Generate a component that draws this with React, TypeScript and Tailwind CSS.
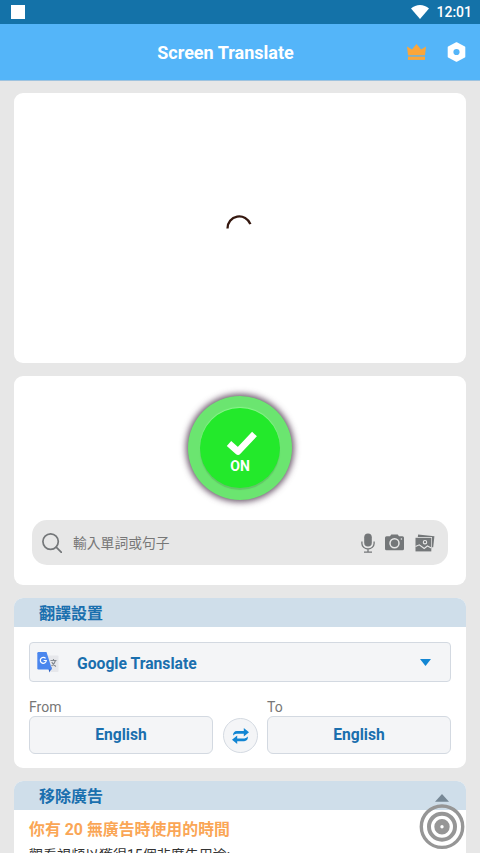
import React from 'react';

interface SectionProps {
  title: string;
  className?: string;
  children: React.ReactNode;
}

function Section({ title, className = '', children }: SectionProps) {
  return (
    <section className={`shrink-0 overflow-hidden rounded-[9px] bg-white ${className}`}>
      <h2 className="flex h-[29px] items-center bg-[#cfdeea] pt-[2px] pl-[25px] text-[16px] leading-none font-bold text-[#1a6fae]">
        {title}
      </h2>
      {children}
    </section>
  );
}

function StatusBar() {
  return (
    <div className="flex h-6 shrink-0 items-center bg-[#1472a8] pr-[8px] pl-[11px]">
      <div className="h-[14px] w-[14px] bg-white" />
      <svg className="ml-auto h-[14px] w-[18px]" viewBox="0 0 18 14">
        <path d="M0 3.6C5-1.2 13-1.2 18 3.6L9 14Z" fill="#fff" />
      </svg>
      <span className="ml-[7px] text-[14px] leading-none font-medium text-white">12:01</span>
    </div>
  );
}

function Header() {
  return (
    <header className="grid h-[57px] shrink-0 grid-cols-[1fr_auto_1fr] items-center border-b border-[#9fc3df] bg-[#54b5f9] pr-[14px]">
      <h1 className="col-start-2 mt-[2px] ml-[-15px] text-[18px] leading-none font-bold text-white">
        Screen Translate
      </h1>
      <div className="flex items-center justify-end gap-[21px]">
        <svg className="h-[16px] w-[19px]" viewBox="0 0 19 16" fill="#fba63a">
          <path d="M0 2.6 4.9 5.6 9.5 0 14.1 5.6 19 2.6 18 11.3H1Z" />
          <path d="M1 12.6H18V15.9H1Z" />
        </svg>
        <svg className="h-[20px] w-[19px]" viewBox="0 0 19 20">
          <path
            d="M9.5 1 17.5 5.3V14.7L9.5 19 1.5 14.7V5.3Z"
            fill="#fff"
            stroke="#fff"
            strokeWidth="1.6"
            strokeLinejoin="round"
          />
          <circle cx="9.5" cy="10" r="3.1" fill="#54b5f9" />
        </svg>
      </div>
    </header>
  );
}

function PowerButton() {
  return (
    <button className="mx-auto mt-[20px] flex h-[104px] w-[104px] items-center justify-center rounded-full bg-[#6be570] shadow-[0_0_6px_2px_rgba(70,45,70,0.8)]">
      <span className="flex h-[80px] w-[80px] flex-col items-center rounded-full bg-[#23e92b] pt-[22px] shadow-[0_2px_1px_#63c567,0_-1px_1px_#8df58f]">
        <svg className="ml-[3px] h-[26px] w-[32px]" viewBox="0 0 32 26">
          <path d="M3 13.5 12 21.5 28.5 4" fill="none" stroke="#fff" strokeWidth="6.6" strokeLinejoin="round" />
        </svg>
        <span className="mt-[3px] font-[Roboto] text-[14px] leading-none font-bold text-white">ON</span>
      </span>
    </button>
  );
}

function SearchBar() {
  return (
    <div className="mx-[18px] mt-[20px] flex h-[45px] items-center rounded-[15px] bg-[#e7e7e7] pr-[13px] pl-[10px] text-[#747779]">
      <svg className="h-[20px] w-[20px]" viewBox="0 0 20 20" fill="none" stroke="currentColor" strokeWidth="1.7">
        <circle cx="8.6" cy="8.6" r="7.7" />
        <path d="m14.2 14.2 5.2 5.2" strokeLinecap="round" />
      </svg>
      <span className="ml-[11px] pt-[2px] text-[13.8px] leading-none text-[#777]">輸入單詞或句子</span>
      <svg className="ml-auto h-[20px] w-[14px]" viewBox="0 0 14 20">
        <rect x="3.2" y="0.5" width="7.6" height="13" rx="3.8" fill="currentColor" />
        <path
          d="M.9 8.5v2a6.1 5.5 0 0 0 12.2 0v-2M7 16v3M3 19.2h8"
          fill="none"
          stroke="currentColor"
          strokeWidth="1.3"
        />
      </svg>
      <svg className="ml-[10px] h-[17px] w-[19px]" viewBox="0 0 19 17">
        <path d="M1.5 2.3H5L6.3.5h6.4L14 2.3h3.5Q19 2.3 19 3.8v11Q19 16.3 17.5 16.3h-16Q0 16.3 0 14.8v-11Q0 2.3 1.5 2.3Z" fill="currentColor" />
        <circle cx="9.5" cy="9.2" r="4.5" fill="none" stroke="#e7e7e7" strokeWidth="1.5" />
        <circle cx="16.4" cy="5" r=".8" fill="#e7e7e7" />
      </svg>
      <svg className="ml-[11px] h-[18px] w-[20px]" viewBox="0 0 20 18">
        <path d="M2.8 2.9 3.1.6 19.4 2.2 18.2 13.2H17V2.9Z" fill="currentColor" />
        <rect x=".5" y="3.8" width="15.8" height="13.6" fill="currentColor" />
        <circle cx="10" cy="8.2" r="1.7" fill="none" stroke="#e7e7e7" strokeWidth="1.1" />
        <path d="M.5 12.5 4.3 10.8 9.2 14.5 12.4 12 16.3 14" fill="none" stroke="#e7e7e7" strokeWidth="1.1" />
      </svg>
    </div>
  );
}

function TranslateIcon() {
  return (
    <svg className="h-[22px] w-[22px]" viewBox="0 0 22 22">
      <path d="M8 4.5H20.5Q21.5 4.5 21.5 5.5V20Q21.5 21 20.5 21H14Z" fill="#e6e7eb" />
      <path d="M11 16.5H15L12.5 21.5Z" fill="#2b5fc4" />
      <path d="M1.5 1H9.5L15 18.5H1.5Q.3 18.5.3 17.3V2.2Q.3 1 1.5 1Z" fill="#4a86ee" />
      <path d="M13.5 9.5H19.5M16.5 8V9.5M18.5 9.5Q17.5 13 14.5 15M14.8 11Q16 14 19 15.5" fill="none" stroke="#858a91" strokeWidth="1.1" />
      <path d="M8.6 7.4A3 3 0 1 0 9.3 9.5H6.6" fill="none" stroke="#fff" strokeWidth="1.2" />
    </svg>
  );
}

interface LanguageFieldProps {
  label: string;
  value: string;
}

function LanguageField({ label, value }: LanguageFieldProps) {
  return (
    <div className="w-[184px]">
      <div className="h-[17px] text-[14px] leading-[16px] text-[#777]">{label}</div>
      <button className="flex h-[38px] w-full items-center justify-center rounded-[6px] border border-[#d3d9e1] bg-[#f4f5f7] pt-[2px] text-[15.6px] leading-none font-bold text-[#1a6fae]">
        {value}
      </button>
    </div>
  );
}

function FloatingBall() {
  return (
    <svg className="absolute top-[793px] left-[419px] h-[57px] w-[46px]" viewBox="0 0 46 57">
      <path d="M23 1 30 8.7H16Z" fill="#778896" />
      <g fill="none" stroke="#969696">
        <circle cx="23" cy="33.7" r="20.7" strokeWidth="3.4" />
        <circle cx="23" cy="33.7" r="13" strokeWidth="4" />
        <circle cx="23" cy="33.7" r="4.7" strokeWidth="6" />
      </g>
    </svg>
  );
}

export default function App() {
  return (
    <div className="relative flex h-[853px] w-[480px] flex-col overflow-hidden bg-[#e7e7e7] font-[Roboto,'Noto_Sans_CJK_TC',sans-serif]">
      <StatusBar />
      <Header />

      <main className="flex flex-col gap-[13px] px-[14px] pt-[12px]">
        {/* Ad slot, still loading */}
        <div className="flex h-[270px] shrink-0 justify-center rounded-[9px] bg-white pt-[121px]">
          <svg className="mr-[2px] h-[26px] w-[26px]" viewBox="0 0 26 26">
            <path d="M1.5 14.5A11.8 11.8 0 0 1 24.4 10.2" fill="none" stroke="#35180f" strokeWidth="2.3" />
          </svg>
        </div>

        <div className="h-[209px] shrink-0 rounded-[9px] bg-white">
          <PowerButton />
          <SearchBar />
        </div>

        <Section title="翻譯設置" className="h-[170px]">
          <div className="px-[15px] pt-[15px]">
            <button className="flex h-[40px] w-full items-center rounded-[4px] border border-[#d3d9e1] bg-[#f4f5f7] pr-[19px] pl-[7px]">
              <TranslateIcon />
              <span className="ml-[18px] pt-[3px] text-[15.7px] leading-none font-bold text-[#1a6fae]">Google Translate</span>
              <svg className="ml-auto h-[7px] w-[11px]" viewBox="0 0 11 7">
                <path d="M0 0H11L5.5 7Z" fill="#1386d3" />
              </svg>
            </button>
            <div className="mt-[17px] flex items-end justify-between">
              <LanguageField label="From" value="English" />
              <button className="mb-[1px] flex h-[35px] w-[35px] items-center justify-center rounded-full border border-[#d3d9e1] bg-[#f4f5f7]">
                <svg className="h-[16px] w-[17px]" viewBox="0 0 17 16" fill="#1386d3">
                  <path d="M11.8 0 17 4.3 11.8 8.4V5.8H4.5Q2.7 5.8 1 7.6 1.2 3 4.8 3H11.8Z" />
                  <path d="M5.2 7.6 0 11.7 5.2 16V13.2H12.2Q15.8 13.2 16 8.6 14.3 10.4 12.5 10.4H5.2Z" />
                </svg>
              </button>
              <LanguageField label="To" value="English" />
            </div>
          </div>
        </Section>

        <Section title="移除廣告" className="h-[170px]">
          <div className="px-[15px] pt-[10px]">
            <p className="text-[15.9px] leading-[19px] font-bold text-[#faa656]">你有 20 無廣告時使用的時間</p>
            <p className="mt-[7px] text-[14px] leading-[18px] text-[#333]">觀看視頻以獲得15個非廣告用途:</p>
          </div>
        </Section>
      </main>

      <FloatingBall />
    </div>
  );
}
